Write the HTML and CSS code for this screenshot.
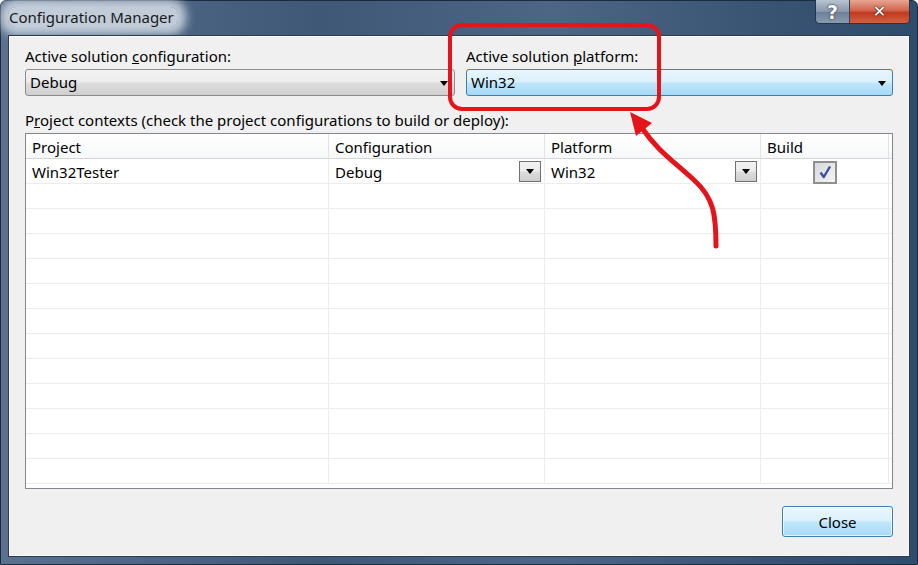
FILE: index.html
```html
<!DOCTYPE html>
<html lang="en">
<head>
    <meta charset="UTF-8">
    <title>Configuration Manager</title>
    <link rel="stylesheet" href="styles.css">
</head>
<body>
    <div class="window">
        <div class="titlebar">
            <span class="title">Configuration Manager</span>
            <div class="caption-buttons">
                <span class="cap help">?</span>
                <span class="cap close">&#x2715;</span>
            </div>
        </div>

        <div class="client">
            <div class="solution-row">
                <div class="field">
                    <label>Active solution <u>c</u>onfiguration:</label>
                    <div class="combo">Debug<span class="arrow"></span></div>
                </div>
                <div class="field">
                    <label>Active solution <u>p</u>latform:</label>
                    <div class="combo hot">Win32<span class="arrow"></span></div>
                </div>
            </div>

            <div class="contexts-label">P<u>r</u>oject contexts (check the project configurations to build or deploy):</div>

            <div class="grid">
                <div class="row head">
                    <div class="cell">Project</div>
                    <div class="cell">Configuration</div>
                    <div class="cell">Platform</div>
                    <div class="cell">Build</div>
                    <div class="cell"></div>
                </div>
                <div class="row">
                    <div class="cell">Win32Tester</div>
                    <div class="cell">Debug<span class="drop"><span class="arrow"></span></span></div>
                    <div class="cell">Win32<span class="drop"><span class="arrow"></span></span></div>
                    <div class="cell check-cell">
                        <span class="checkbox">
                            <svg width="16" height="16" viewBox="0 0 16 16">
                                <path d="M3.5 8.5 L6.8 13 L13 2.5" fill="none" stroke="#3d4f9e" stroke-width="2.4" stroke-linejoin="round"/>
                            </svg>
                        </span>
                    </div>
                    <div class="cell"></div>
                </div>
                <div class="row"><div class="cell"></div><div class="cell"></div><div class="cell"></div><div class="cell"></div><div class="cell"></div></div>
                <div class="row"><div class="cell"></div><div class="cell"></div><div class="cell"></div><div class="cell"></div><div class="cell"></div></div>
                <div class="row"><div class="cell"></div><div class="cell"></div><div class="cell"></div><div class="cell"></div><div class="cell"></div></div>
                <div class="row"><div class="cell"></div><div class="cell"></div><div class="cell"></div><div class="cell"></div><div class="cell"></div></div>
                <div class="row"><div class="cell"></div><div class="cell"></div><div class="cell"></div><div class="cell"></div><div class="cell"></div></div>
                <div class="row"><div class="cell"></div><div class="cell"></div><div class="cell"></div><div class="cell"></div><div class="cell"></div></div>
                <div class="row"><div class="cell"></div><div class="cell"></div><div class="cell"></div><div class="cell"></div><div class="cell"></div></div>
                <div class="row"><div class="cell"></div><div class="cell"></div><div class="cell"></div><div class="cell"></div><div class="cell"></div></div>
                <div class="row"><div class="cell"></div><div class="cell"></div><div class="cell"></div><div class="cell"></div><div class="cell"></div></div>
                <div class="row"><div class="cell"></div><div class="cell"></div><div class="cell"></div><div class="cell"></div><div class="cell"></div></div>
                <div class="row"><div class="cell"></div><div class="cell"></div><div class="cell"></div><div class="cell"></div><div class="cell"></div></div>
                <div class="row"><div class="cell"></div><div class="cell"></div><div class="cell"></div><div class="cell"></div><div class="cell"></div></div>
            </div>

            <div class="footer">
                <button class="btn">Close</button>
            </div>
        </div>

        <!-- red callout drawn over the dialog -->
        <svg class="annotation" width="918" height="565" viewBox="0 0 918 565">
            <rect x="450" y="25" width="209" height="84" rx="12" fill="none" stroke="#e5141b" stroke-width="4"/>
            <path d="M716 246 C716 215 714 198 694 180 C672 160 657 150 642 128" fill="none" stroke="#e5141b" stroke-width="5" stroke-linecap="round"/>
            <polygon points="630,112 652,123 636,136" fill="#e5141b"/>
        </svg>
    </div>
</body>
</html>
```

FILE: styles.css
```css
body {
    margin: 0;
    font-family: "Noto Sans", "Open Sans", sans-serif;
    font-size: 15px;
    color: #000;
}

.window {
    position: relative;
    width: 918px;
    height: 565px;
    box-sizing: border-box;
    padding: 0 7px 7px 7px;
    display: flex;
    flex-direction: column;
    background: linear-gradient(90deg, #5a7190 0%, #3f5876 35%, #4d6686 60%, #385272 85%, #2f4c6c 100%);
    border: 1px solid #1c2c40;
    border-radius: 6px 6px 0 0;
}

.titlebar {
    height: 34px;
    display: flex;
    justify-content: space-between;
    align-items: flex-start;
}

.title {
    margin-top: 6px;
    padding: 0 4px 0 1px;
    font-size: 15px;
    color: #1a1a1a;
    background: rgba(214, 222, 232, 0.85);
    box-shadow: 0 0 10px 8px rgba(214, 222, 232, 0.85);
    border-radius: 8px;
}

.caption-buttons {
    display: flex;
    margin-top: -1px;
    margin-right: 0;
    border: 1px solid #24364d;
    border-top: none;
    border-radius: 0 0 5px 5px;
    overflow: hidden;
}

.cap {
    height: 23px;
    display: flex;
    align-items: center;
    justify-content: center;
    color: #fff;
    font-weight: bold;
    font-family: "DejaVu Sans", sans-serif;
    text-shadow: 0 0 2px #333, 0 0 1px #000;
}

.help {
    width: 33px;
    font-size: 19px;
    background: linear-gradient(#b8c4d2, #8797ac 50%, #6b7e96 51%, #8a9bb0);
    border-right: 1px solid #33445a;
}

.close {
    width: 59px;
    font-size: 16px;
    background: linear-gradient(#e8a593, #d2664c 45%, #c2391f 55%, #d4603f);
}

.client {
    flex: 1;
    background: #f0f0f0;
    border: 1px solid #2a3b52;
    box-shadow: inset 0 0 0 1px #fafafa;
    padding: 10px 16px 0 16px;
    display: flex;
    flex-direction: column;
}

.solution-row {
    display: grid;
    grid-template-columns: 430px 1fr;
    gap: 11px;
}

.field label {
    display: block;
    line-height: 20px;
    height: 20px;
    margin-bottom: 3px;
}

.combo {
    position: relative;
    height: 27px;
    box-sizing: border-box;
    border: 1px solid #8b8b8b;
    border-radius: 3px;
    padding-left: 4px;
    line-height: 25px;
    background: linear-gradient(#f3f3f3, #ebebeb 48%, #dddddd 52%, #cfcfcf);
}

.combo.hot {
    border-color: #3c7fb1;
    background: linear-gradient(#eaf6fd, #d9f0fc 48%, #bee6fd 52%, #a7d9f5);
}

.arrow {
    width: 0;
    height: 0;
    border-left: 4px solid transparent;
    border-right: 4px solid transparent;
    border-top: 5px solid #000;
}

.combo .arrow {
    position: absolute;
    right: 6px;
    top: 11px;
}

.contexts-label {
    margin-top: 14px;
    line-height: 20px;
}

.grid {
    margin-top: 3px;
    height: 356px;
    overflow: hidden;
    box-sizing: border-box;
    border: 1px solid #828790;
    background: #fff;
}

.row {
    display: grid;
    grid-template-columns: 303px 216px 216px 128px 1fr;
    height: 25px;
    box-sizing: border-box;
    border-bottom: 1px solid #ececec;
}

.row.head {
    background: linear-gradient(#ffffff, #f7f8f9);
    border-bottom: 1px solid #d5d5d5;
}

.cell {
    position: relative;
    box-sizing: border-box;
    border-right: 1px solid #ececec;
    padding-left: 6px;
    line-height: 26px;
    white-space: nowrap;
}

.head .cell {
    border-right-color: #e3e3e3;
}

.cell:last-child {
    border-right: none;
}

.drop {
    position: absolute;
    right: 3px;
    top: 2px;
    width: 22px;
    height: 21px;
    box-sizing: border-box;
    border: 1px solid #707070;
    background: linear-gradient(#f2f2f2, #ebebeb 48%, #dddddd 52%, #cfcfcf);
    display: flex;
    align-items: center;
    justify-content: center;
}

.check-cell {
    display: flex;
    justify-content: center;
    align-items: center;
    padding-left: 0;
}

.checkbox {
    width: 24px;
    height: 23px;
    box-sizing: border-box;
    border: 2px solid #8f8f8f;
    background: linear-gradient(135deg, #d5d8dc, #f4f5f6);
    display: flex;
    align-items: center;
    justify-content: center;
}

.footer {
    display: flex;
    justify-content: flex-end;
    margin-top: 17px;
}

.btn {
    width: 111px;
    height: 31px;
    font-family: inherit;
    font-size: 15px;
    border: 1px solid #3c7fb1;
    border-radius: 3px;
    box-shadow: inset 0 0 0 1px rgba(255, 255, 255, 0.7);
    background: linear-gradient(#eaf6fd, #d9f0fc 48%, #bee6fd 52%, #a7d9f5);
}

.annotation {
    position: absolute;
    left: -1px;
    top: -1px;
    pointer-events: none;
}
```
